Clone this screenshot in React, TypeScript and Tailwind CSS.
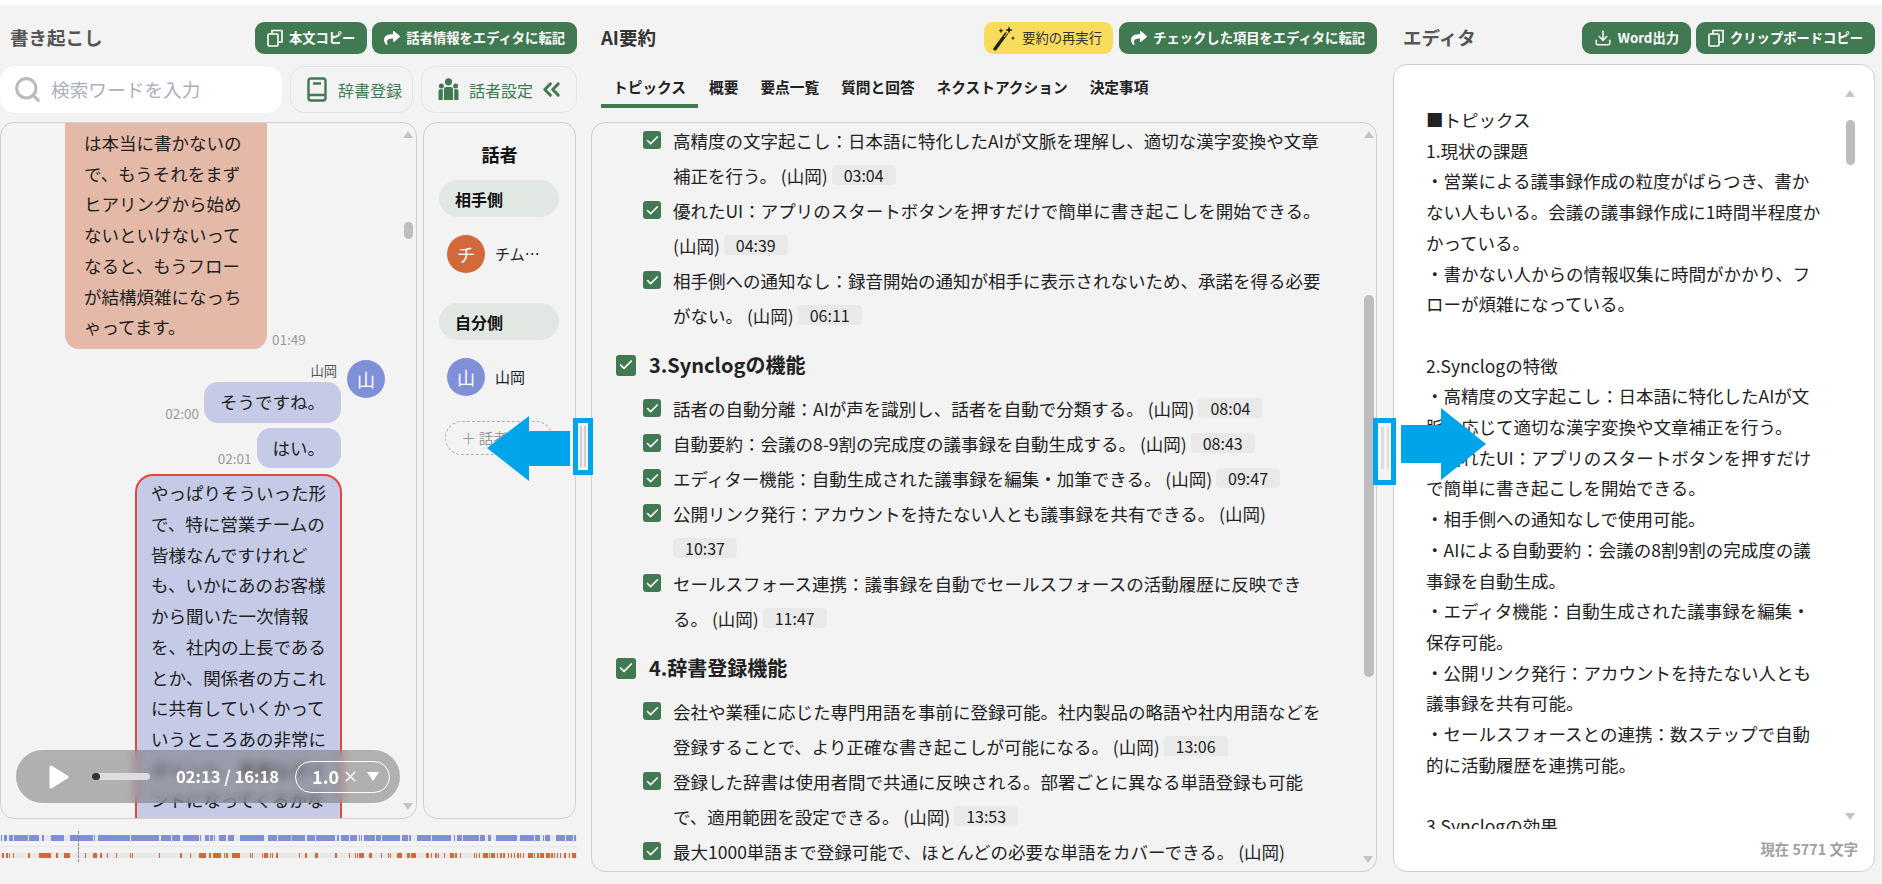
import { Check, ChevronsLeft, Download, Search, X } from "lucide-react";
import { FaShare } from "react-icons/fa";

const blueSegments = [
  [3, 6], [12, 21], [27, 39], [42, 84], [87, 117], [126, 132], [153, 192], [210, 279], [282, 285], [294, 390],
  [393, 477], [483, 513], [516, 540], [549, 597], [600, 603], [615, 627], [630, 639], [642, 645], [657, 678],
  [684, 702], [720, 792], [804, 831], [834, 874], [876, 915], [921, 945], [948, 1005], [1011, 1017], [1023, 1047],
  [1050, 1071], [1077, 1080], [1083, 1086], [1092, 1125], [1128, 1143], [1146, 1200], [1206, 1224], [1227, 1233],
  [1251, 1293], [1296, 1353], [1362, 1365], [1371, 1386], [1389, 1437], [1440, 1455], [1464, 1473], [1488, 1551],
  [1560, 1602], [1605, 1620], [1629, 1632], [1635, 1650], [1668, 1695], [1698, 1719], [1722, 1728],
];

const orangeSegments = [
  [6, 12], [18, 24], [27, 30], [39, 42], [84, 90], [117, 153], [168, 174], [192, 210], [255, 258], [279, 291],
  [300, 306], [321, 324], [348, 351], [390, 393], [396, 399], [477, 480], [540, 546], [570, 573], [597, 618],
  [627, 633], [639, 663], [672, 675], [678, 684], [696, 720], [750, 753], [756, 759], [786, 789], [792, 804],
  [810, 813], [816, 819], [828, 834], [897, 900], [915, 921], [945, 954], [1005, 1011], [1047, 1050], [1065, 1068],
  [1071, 1074], [1077, 1092], [1107, 1116], [1143, 1146], [1164, 1167], [1170, 1173], [1191, 1206], [1221, 1230],
  [1233, 1248], [1278, 1287], [1293, 1296], [1305, 1311], [1314, 1317], [1332, 1335], [1350, 1362], [1365, 1371],
  [1380, 1383], [1422, 1425], [1428, 1431], [1437, 1440], [1449, 1464], [1467, 1470], [1473, 1485], [1491, 1494],
  [1500, 1506], [1509, 1515], [1524, 1527], [1533, 1536], [1542, 1545], [1551, 1557], [1560, 1563], [1569, 1572],
  [1584, 1599], [1602, 1605], [1611, 1617], [1620, 1632], [1638, 1650], [1653, 1659], [1662, 1665], [1671, 1674],
  [1680, 1683], [1692, 1698], [1707, 1710], [1716, 1728],
];

const editorLines = [
  "■トピックス",
  "1.現状の課題",
  "・営業による議事録作成の粒度がばらつき、書かない人もいる。会議の議事録作成に1時間半程度かかっている。",
  "・書かない人からの情報収集に時間がかかり、フローが煩雑になっている。",
  "",
  "2.Synclogの特徴",
  "・高精度の文字起こし：日本語に特化したAIが文脈に応じて適切な漢字変換や文章補正を行う。",
  "・優れたUI：アプリのスタートボタンを押すだけで簡単に書き起こしを開始できる。",
  "・相手側への通知なしで使用可能。",
  "・AIによる自動要約：会議の8割9割の完成度の議事録を自動生成。",
  "・エディタ機能：自動生成された議事録を編集・保存可能。",
  "・公開リンク発行：アカウントを持たない人とも議事録を共有可能。",
  "・セールスフォースとの連携：数ステップで自動的に活動履歴を連携可能。",
  "",
  "3.Synclogの効果",
];

const tabs = ["概要", "要点一覧", "質問と回答", "ネクストアクション", "決定事項"];

function CopyIcon() {
  return (
    <svg width="16" height="18" viewBox="0 0 16 18" fill="none" stroke="white" strokeWidth="1.6">
      <rect x="1" y="5" width="10" height="12" rx="1" />
      <path d="M5 5 V1.5 H15 V13 H11" />
    </svg>
  );
}

function WandIcon() {
  return (
    <svg width="22" height="26" viewBox="0 0 22 26" className="shrink-0">
      <path d="M2 24 L13 9" stroke="#222" strokeWidth="3.4" strokeLinecap="round" />
      <path d="M11 12 L14 8" stroke="#f9dc5c" strokeWidth="1" />
      <path
        d="M16 1 L17 4 L20 5 L17 6 L16 9 L15 6 L12 5 L15 4 Z M8 3 L8.7 5 L10.5 5.7 L8.7 6.4 L8 8.4 L7.3 6.4 L5.5 5.7 L7.3 5 Z M20 11 L20.6 12.6 L22 13.2 L20.6 13.8 L20 15.4 L19.4 13.8 L18 13.2 L19.4 12.6 Z"
        fill="#222"
      />
    </svg>
  );
}

function UsersIcon() {
  return (
    <svg width="21" height="23" viewBox="0 0 21 23" fill="#417a52" className="shrink-0">
      <circle cx="10.5" cy="3.8" r="3.6" />
      <circle cx="3.4" cy="8" r="2.5" />
      <circle cx="17.6" cy="8" r="2.5" />
      <path d="M6 11 Q6 9 8 9 H13 Q15 9 15 11 V22 H6 Z" />
      <path d="M0.5 13 Q0.5 11.3 2.2 11.3 H4.8 V22 H0.5 Z" />
      <path d="M20.5 13 Q20.5 11.3 18.8 11.3 H16.2 V22 H20.5 Z" />
    </svg>
  );
}

function GreenButton({ icon, label }: { icon: React.ReactNode; label: string }) {
  return (
    <button className="flex h-[32px] items-center gap-[6px] rounded-[9px] bg-[#417a52] px-[12px] text-[13.3px] font-bold text-white">
      {icon}
      {label}
    </button>
  );
}

function UpArrow() {
  return <div className="h-0 w-0 border-x-[5px] border-b-[7px] border-x-transparent border-b-[#c4c4c4]" />;
}

function DownArrow() {
  return <div className="h-0 w-0 border-x-[5px] border-t-[7px] border-x-transparent border-t-[#c4c4c4]" />;
}

function CheckBox({ big }: { big?: boolean }) {
  return (
    <span
      className={
        big
          ? "flex h-[21px] w-[20px] shrink-0 items-center justify-center rounded-[3px] bg-[#417a52] text-white"
          : "mt-[8px] flex h-[18px] w-[18px] shrink-0 items-center justify-center rounded-[3px] bg-[#417a52] text-white"
      }
    >
      <Check size={big ? 16 : 15} strokeWidth={2.5} />
    </span>
  );
}

function Item({ text, time }: { text: string; time?: string }) {
  return (
    <div className="flex gap-[12px] pl-[51px]">
      <CheckBox />
      <p className="w-[652px] text-[17.5px] leading-[35px] text-[#222]">
        {text} (山岡){" "}
        {time && (
          <span className="inline-block h-[20px] rounded-[4px] bg-[#e9e9e9] px-[12px] align-[1px] text-[16px] leading-[20px]">
            {time}
          </span>
        )}
      </p>
    </div>
  );
}

function Section({ title }: { title: string }) {
  return (
    <div className="mb-[12px] mt-[18px] flex h-[28px] items-center gap-[13px] pl-[24px]">
      <CheckBox big />
      <h3 className="text-[20px] font-bold text-[#222]">{title}</h3>
    </div>
  );
}

function Avatar({ char, color }: { char: string; color: string }) {
  return (
    <div className={`flex h-[38px] w-[38px] shrink-0 items-center justify-center rounded-full text-[18px] text-white ${color}`}>
      {char}
    </div>
  );
}

function Timeline() {
  return (
    <svg width="577" height="33" className="mt-[11px] block">
      <rect x="0" y="5" width="577" height="6" fill="#e8e8e8" />
      <rect x="0" y="16" width="577" height="1" fill="#e8e8e8" />
      <rect x="0" y="23" width="577" height="5" fill="#e8e8e8" />
      {blueSegments.map(([a, b]) => (
        <rect key={a} x={a / 3} y="5" width={(b - a) / 3} height="6" fill="#7f8fd8" />
      ))}
      {orangeSegments.map(([a, b]) => (
        <rect key={a} x={a / 3} y="23" width={(b - a) / 3} height="5" fill="#d2693a" />
      ))}
      <line x1="78.5" y1="1" x2="78.5" y2="32" stroke="#888" strokeWidth="1" strokeDasharray="3 1" />
    </svg>
  );
}

function Player() {
  return (
    <div className="absolute bottom-[15px] left-[15px] flex h-[53px] w-[384px] items-center rounded-full bg-[#6e6e6e]/50 pl-[33px] text-white backdrop-blur-[4px]">
      <svg width="20" height="24" viewBox="0 0 20 24" className="shrink-0">
        <path d="M2 2 L18 12 L2 22 Z" fill="white" stroke="white" strokeWidth="3" strokeLinejoin="round" />
      </svg>
      <div className="ml-[23px] h-[7px] w-[58px] shrink-0 rounded-full bg-[#dddddd]">
        <div className="h-[7px] w-[8px] rounded-full bg-[#333]" />
      </div>
      <span className="ml-[26px] whitespace-nowrap text-[16.6px] font-bold">02:13 / 16:18</span>
      <div className="ml-[16px] flex h-[32px] w-[95px] shrink-0 items-center rounded-full border border-white pl-[16px] text-[18px] font-bold">
        1.0
        <X size={17} className="ml-[3px]" />
        <div className="ml-[8px] h-0 w-0 border-x-[6px] border-t-[9px] border-x-transparent border-t-white" />
      </div>
    </div>
  );
}

function ChatColumn() {
  return (
    <div className="relative h-[697px] w-[417px] shrink-0 overflow-hidden rounded-[14px] border border-[#cfcfcf] text-[17.5px] leading-[30.7px] text-[#222]">
      <div className="flex items-end gap-[5px] pl-[64px]">
        <div className="w-[202px] rounded-b-[14px] bg-[#e5b9a7] pb-[6px] pl-[19px] pr-[19px] pt-[5px]">
          は本当に書かないので、もうそれをまずヒアリングから始めないといけないってなると、もうフローが結構煩雑になっちゃってます。
        </div>
        <span className="pb-[1px] text-[13.5px] leading-[18px] text-[#999]">01:49</span>
      </div>

      <div className="mt-[11px] flex justify-end gap-[6px] pr-[31px]">
        <div className="flex flex-col items-end">
          <span className="mr-[4px] h-[22px] text-[13.3px] leading-[22px] text-[#555]">山岡</span>
          <div className="flex items-end gap-[5px]">
            <span className="pb-[1px] text-[13.5px] leading-[18px] text-[#999]">02:00</span>
            <div className="rounded-[14px] bg-[#c5cbe6] px-[16px] py-[5px]">そうですね。</div>
          </div>
          <div className="mt-[5px] flex items-end gap-[5px]">
            <span className="pb-[1px] text-[13.5px] leading-[18px] text-[#999]">02:01</span>
            <div className="rounded-[14px] bg-[#c5cbe6] px-[16px] py-[5px]">はい。</div>
          </div>
        </div>
        <Avatar char="山" color="bg-[#7f8fd8]" />
      </div>

      <div className="ml-[134px] mt-[6px] w-[207px] rounded-[18px] border-2 border-[#e8433a] bg-[#c5cbe6] px-[14px] pb-[60px] pt-[2px]">
        やっぱりそういった形で、特に営業チームの皆様なんですけれども、いかにあのお客様から聞いた一次情報を、社内の上長であるとか、関係者の方これに共有していくかっていうところあの非常にポイント、重要なポイントになってくるかな
      </div>

      <div className="absolute right-[3px] top-[8px] flex flex-col items-center">
        <UpArrow />
        <div className="mt-[84px] h-[17px] w-[9px] rounded-full bg-[#bdbdbd]" />
      </div>
      <div className="absolute bottom-[8px] right-[3px]">
        <DownArrow />
      </div>
      <Player />
    </div>
  );
}

function SpeakerColumn() {
  return (
    <div className="h-[697px] w-[153px] shrink-0 rounded-[14px] border border-[#cfcfcf] px-[15px] pt-[18px]">
      <h3 className="text-center text-[18px] font-bold leading-[26px] text-[#111]">話者</h3>
      <div className="mt-[13px] flex h-[37px] w-[120px] items-center rounded-full bg-[#e1e7e3] pl-[16px] text-[16px] font-bold text-[#111]">
        相手側
      </div>
      <div className="mt-[18px] flex items-center gap-[10px] pl-[8px]">
        <Avatar char="チ" color="bg-[#d2693a]" />
        <span className="text-[15px] text-[#222]">チム…</span>
      </div>
      <div className="mt-[30px] flex h-[37px] w-[120px] items-center rounded-full bg-[#e1e7e3] pl-[16px] text-[16px] font-bold text-[#111]">
        自分側
      </div>
      <div className="mt-[18px] flex items-center gap-[10px] pl-[8px]">
        <Avatar char="山" color="bg-[#7f8fd8]" />
        <span className="text-[15px] text-[#222]">山岡</span>
      </div>
      <div className="ml-[6px] mt-[25px] flex h-[34px] w-[108px] items-center justify-center gap-[3px] rounded-full border border-dashed border-[#b0b0b0] text-[14.5px] text-[#999]">
        ＋ 話者追加
      </div>
    </div>
  );
}

function LeftPane() {
  return (
    <div className="w-[577px] shrink-0">
      <div className="flex h-[32px] items-center justify-between">
        <h2 className="pl-[10px] text-[18.5px] font-bold text-[#555]">書き起こし</h2>
        <div className="flex gap-[5px]">
          <GreenButton icon={<CopyIcon />} label="本文コピー" />
          <GreenButton icon={<FaShare size={16} />} label="話者情報をエディタに転記" />
        </div>
      </div>

      <div className="mt-[12px] flex h-[47px] gap-[8px]">
        <div className="flex w-[282px] items-center rounded-[14px] bg-white pl-[13px] shadow-[0_0_1px_#ddd]">
          <Search size={29} strokeWidth={2.5} className="text-[#bbbbbb]" />
          <span className="ml-[9px] text-[18.7px] text-[#aab0bd]">検索ワードを入力</span>
        </div>
        <div className="flex w-[123px] items-center gap-[11px] rounded-[14px] border border-[#e4e4e4] pl-[16px] text-[16px] text-[#417a52]">
          <svg width="20" height="25" viewBox="0 0 20 25" fill="none" stroke="#417a52" strokeWidth="2.4">
            <rect x="1.5" y="1.5" width="17" height="22" rx="2.5" />
            <path d="M1.5 18 H18.5 M6 6.5 H14" />
          </svg>
          辞書登録
        </div>
        <div className="flex w-[156px] items-center rounded-[14px] border border-[#e4e4e4] pl-[16px] text-[16px] text-[#417a52]">
          <UsersIcon />
          <span className="ml-[10px]">話者設定</span>
          <ChevronsLeft size={27} strokeWidth={2.6} className="ml-[5px]" />
        </div>
      </div>

      <div className="mt-[9px] flex gap-[6px]">
        <ChatColumn />
        <SpeakerColumn />
      </div>
      <Timeline />
    </div>
  );
}

function MiddlePane() {
  return (
    <div className="ml-[14px] w-[786px] shrink-0">
      <div className="flex h-[32px] items-center justify-between">
        <h2 className="pl-[10px] text-[18.5px] font-bold text-[#333]">AI要約</h2>
        <div className="flex gap-[6px]">
          <button className="flex h-[32px] w-[129px] items-center gap-[7px] rounded-[9px] bg-[#f9dc5c] pl-[9px] text-[13.3px] text-[#333]">
            <WandIcon />
            要約の再実行
          </button>
          <GreenButton icon={<FaShare size={16} />} label="チェックした項目をエディタに転記" />
        </div>
      </div>

      <div className="mt-[16px] flex h-[38px] pl-[10px] text-[14.7px] font-bold text-[#222]">
        <div className="h-[38px] border-b-4 border-[#417a52] px-[12px] pt-[6px]">トピックス</div>
        {tabs.map((t) => (
          <div key={t} className="px-[11px] pt-[6px]">
            {t}
          </div>
        ))}
      </div>

      <div className="relative mt-[14px] h-[750px] overflow-hidden rounded-[14px] border border-[#cfcfcf]">
        <Item text="高精度の文字起こし：日本語に特化したAIが文脈を理解し、適切な漢字変換や文章補正を行う。" time="03:04" />
        <Item text="優れたUI：アプリのスタートボタンを押すだけで簡単に書き起こしを開始できる。" time="04:39" />
        <Item text="相手側への通知なし：録音開始の通知が相手に表示されないため、承諾を得る必要がない。" time="06:11" />
        <Section title="3.Synclogの機能" />
        <Item text="話者の自動分離：AIが声を識別し、話者を自動で分類する。" time="08:04" />
        <Item text="自動要約：会議の8-9割の完成度の議事録を自動生成する。" time="08:43" />
        <Item text="エディター機能：自動生成された議事録を編集・加筆できる。" time="09:47" />
        <Item text="公開リンク発行：アカウントを持たない人とも議事録を共有できる。" time="10:37" />
        <Item text="セールスフォース連携：議事録を自動でセールスフォースの活動履歴に反映できる。" time="11:47" />
        <Section title="4.辞書登録機能" />
        <Item text="会社や業種に応じた専門用語を事前に登録可能。社内製品の略語や社内用語などを登録することで、より正確な書き起こしが可能になる。" time="13:06" />
        <Item text="登録した辞書は使用者間で共通に反映される。部署ごとに異なる単語登録も可能で、適用範囲を設定できる。" time="13:53" />
        <Item text="最大1000単語まで登録可能で、ほとんどの必要な単語をカバーできる。" />

        <div className="absolute right-[2px] top-[8px] flex flex-col items-center">
          <UpArrow />
          <div className="mt-[157px] h-[382px] w-[10px] rounded-full bg-[#bdbdbd]" />
        </div>
        <div className="absolute bottom-[8px] right-[3px]">
          <DownArrow />
        </div>
      </div>
    </div>
  );
}

function EditorPane() {
  return (
    <div className="ml-[16px] w-[482px] shrink-0">
      <div className="flex h-[32px] items-center justify-between">
        <h2 className="pl-[10px] text-[18.5px] font-bold text-[#555]">エディタ</h2>
        <div className="flex gap-[5px]">
          <GreenButton icon={<Download size={18} strokeWidth={2} />} label="Word出力" />
          <GreenButton icon={<CopyIcon />} label="クリップボードコピー" />
        </div>
      </div>

      <div className="relative mt-[10px] flex h-[808px] flex-col rounded-[14px] border border-[#cfcfcf] bg-white">
        <div className="flex-1 overflow-hidden pl-[32px] pt-[40px]">
          <div className="w-[396px] text-[17.5px] leading-[30.7px] text-[#222]">
            {editorLines.map((line, i) => (
              <p key={i} className="min-h-[30.7px]">
                {line}
              </p>
            ))}
          </div>
        </div>
        <div className="h-[42px] pr-[16px] pt-[9px] text-right text-[14.3px] font-bold text-[#a0a0a0]">現在 5771 文字</div>

        <div className="absolute right-[19px] top-[25px] flex flex-col items-center">
          <UpArrow />
          <div className="mt-[23px] h-[45px] w-[9px] rounded-full bg-[#bdbdbd]" />
        </div>
        <div className="absolute bottom-[51px] right-[19px]">
          <DownArrow />
        </div>
      </div>
    </div>
  );
}

export default function App() {
  return (
    <div className="relative h-[884px] w-[1882px] overflow-hidden bg-[#f3f3f3] font-['Noto_Sans_CJK_JP','Noto_Sans',sans-serif]">
      <div className="h-[5px] bg-white" />
      <div className="flex pt-[17px]">
        <LeftPane />
        <MiddlePane />
        <EditorPane />
      </div>

      {/* annotation arrows drawn over the screenshot */}
      <div className="absolute left-[573px] top-[418px] h-[57px] w-[20px] border-[5px] border-[#00a4e8] bg-[#f3f3f3]">
        <div className="ml-[2px] mt-[3px] flex h-[41px] gap-[2px]">
          <div className="w-[2px] bg-[#cfcfcf]" />
          <div className="w-[2px] bg-[#cfcfcf]" />
        </div>
      </div>
      <svg className="absolute left-[480px] top-[410px]" width="95" height="75">
        <polygon points="7,38 49,6 49,21 90,21 90,56 49,56 49,71" fill="#00a4e8" />
      </svg>

      <div className="absolute left-[1373px] top-[418px] h-[67px] w-[23px] border-[5px] border-[#00a4e8] bg-[#f3f3f3]">
        <div className="ml-[3px] mt-[4px] flex h-[42px] gap-[3px]">
          <div className="w-[3px] bg-[#dddddd]" />
          <div className="w-[2px] bg-[#dddddd]" />
        </div>
      </div>
      <svg className="absolute left-[1398px] top-[405px]" width="92" height="78">
        <polygon points="3,20 43,20 43,3 88,39 43,75 43,58 3,58" fill="#00a4e8" />
      </svg>
    </div>
  );
}
